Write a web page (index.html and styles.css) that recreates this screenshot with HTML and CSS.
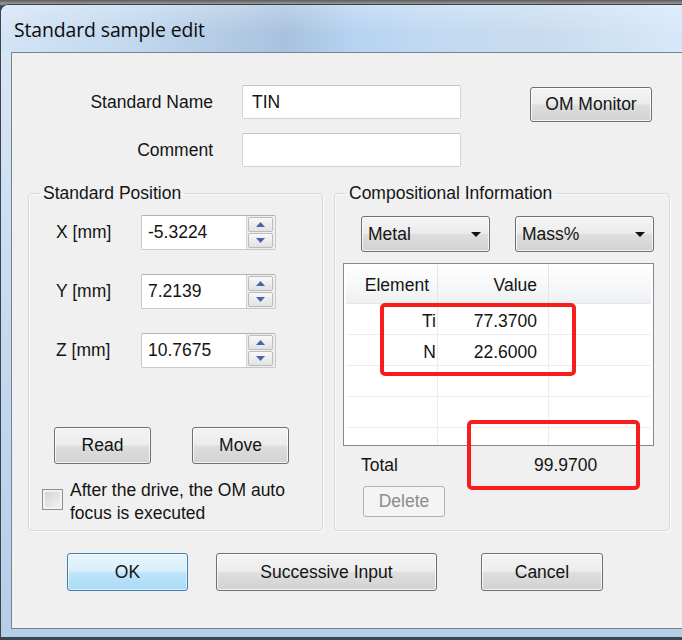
FILE: index.html
```html
<!DOCTYPE html>
<html>
<head>
<meta charset="utf-8">
<title>Standard sample edit</title>
<link rel="stylesheet" href="styles.css">
</head>
<body>
<div class="window">
  <div class="titlebar"><span class="title">Standard sample edit</span></div>
  <div class="frame">
    <div class="client">
      <div class="top">
        <span class="lbl">Standard Name</span>
        <div class="field">TIN</div>
        <button class="btn om">OM Monitor</button>
        <span class="lbl">Comment</span>
        <div class="field"></div>
      </div>

      <div class="groups">
        <fieldset class="group gpos">
          <legend>Standard Position</legend>
          <div class="gbody-l">
            <div class="axes">
              <div class="axis">
                <span class="axis-lbl">X [mm]</span>
                <div class="spin">
                  <div class="spin-val">-5.3224</div>
                  <div class="spin-btns">
                    <span class="sb"><svg width="9" height="5" viewBox="0 0 9 5"><polygon points="0,5 9,5 4.5,0" class="arr"/></svg></span>
                    <span class="sb"><svg width="9" height="5" viewBox="0 0 9 5"><polygon points="0,0 9,0 4.5,5" class="arr"/></svg></span>
                  </div>
                </div>
              </div>
              <div class="axis">
                <span class="axis-lbl">Y [mm]</span>
                <div class="spin">
                  <div class="spin-val">7.2139</div>
                  <div class="spin-btns">
                    <span class="sb"><svg width="9" height="5" viewBox="0 0 9 5"><polygon points="0,5 9,5 4.5,0" class="arr"/></svg></span>
                    <span class="sb"><svg width="9" height="5" viewBox="0 0 9 5"><polygon points="0,0 9,0 4.5,5" class="arr"/></svg></span>
                  </div>
                </div>
              </div>
              <div class="axis">
                <span class="axis-lbl">Z [mm]</span>
                <div class="spin">
                  <div class="spin-val">10.7675</div>
                  <div class="spin-btns">
                    <span class="sb"><svg width="9" height="5" viewBox="0 0 9 5"><polygon points="0,5 9,5 4.5,0" class="arr"/></svg></span>
                    <span class="sb"><svg width="9" height="5" viewBox="0 0 9 5"><polygon points="0,0 9,0 4.5,5" class="arr"/></svg></span>
                  </div>
                </div>
              </div>
            </div>
            <div class="btnrow">
              <button class="btn rm">Read</button>
              <button class="btn rm">Move</button>
            </div>
            <div class="check">
              <span class="cb"></span>
              <span class="cb-text">After the drive, the OM auto<br>focus is executed</span>
            </div>
          </div>
        </fieldset>

        <fieldset class="group gcomp">
          <legend>Compositional Information</legend>
          <div class="gbody-r">
            <div class="dds">
              <div class="dd dd1"><span>Metal</span><svg width="10" height="5" viewBox="0 0 10 5"><polygon points="0,0 10,0 5,5" fill="#111"/></svg></div>
              <div class="dd dd2"><span>Mass%</span><svg width="10" height="5" viewBox="0 0 10 5"><polygon points="0,0 10,0 5,5" fill="#111"/></svg></div>
            </div>
            <div class="tbl">
              <div class="tr thead"><span class="c1 h">Element</span><span class="c2 h">Value</span><span class="c3"></span></div>
              <div class="tr"><span class="c1 e">Ti</span><span class="c2">77.3700</span><span class="c3"></span></div>
              <div class="tr"><span class="c1 e">N</span><span class="c2">22.6000</span><span class="c3"></span></div>
              <div class="tr"><span class="c1"></span><span class="c2"></span><span class="c3"></span></div>
              <div class="tr"><span class="c1"></span><span class="c2"></span><span class="c3"></span></div>
              <div class="tr"><span class="c1"></span><span class="c2"></span><span class="c3"></span></div>
            </div>
            <div class="total"><span class="total-lbl">Total</span><span class="total-val">99.9700</span></div>
            <button class="btn del" disabled>Delete</button>
          </div>
        </fieldset>
      </div>

      <div class="bottom">
        <button class="btn ok">OK</button>
        <button class="btn succ">Successive Input</button>
        <button class="btn cancel">Cancel</button>
      </div>

      <div class="mark m1"></div>
      <div class="mark m2"></div>
    </div>
  </div>
</div>
</body>
</html>
```
FILE: styles.css
```css
* { box-sizing: border-box; }
html, body { margin: 0; padding: 0; }
body {
  width: 682px;
  height: 640px;
  overflow: hidden;
  background: linear-gradient(#5c5c5c, #9a9a9a 4px, #3a4652 6px);
  font-family: "Liberation Sans", Arial, sans-serif;
  font-size: 17.5px;
  color: #141414;
}
.window {
  margin-top: 4px;
  height: 634px;
  border: 1px solid #3a4450;
  border-right: none;
  border-top-left-radius: 9px;
  background: linear-gradient(#dbe8f6, #c6daef 50%, #b5cee8);
  display: flex;
  flex-direction: column;
  overflow: hidden;
}
.titlebar {
  height: 47px;
  flex: none;
  padding: 1px 0 0 13px;
  display: flex;
  align-items: center;
  background:
    linear-gradient(rgba(255,255,255,0.25), rgba(255,255,255,0) 60%),
    linear-gradient(to right, #d3e4f5 0%, #c4d9ef 18%, #a8c2de 42%, #b6d3f1 52%, #c0d9f2 62%, #c9dcef 80%, #d6e8f9 100%);
}
.title {
  font-family: "Open Sans", "Noto Sans", sans-serif;
  font-size: 19.4px;
  color: #0c0c0c;
  letter-spacing: -0.1px;
}
.frame {
  flex: 1;
  padding: 0 0 8px 10px;
  display: flex;
}
.client {
  flex: 1;
  position: relative;
  background: #f0f0f0;
  border: 1px solid #76838f;
  border-right: none;
}

/* top fields */
.top {
  display: grid;
  grid-template-columns: 201px 219px 162px;
  grid-template-rows: 34px 34px;
  column-gap: 29px;
  row-gap: 14px;
  padding-top: 32px;
}
.lbl {
  align-self: center;
  text-align: right;
  line-height: 20px;
}
.field {
  background: #fff;
  border: 1px solid #d3d3d3;
  border-top-color: #c4c4c4;
  border-radius: 2px;
  padding-left: 9px;
  line-height: 32px;
}

/* buttons */
.btn {
  font: inherit;
  color: #141414;
  padding: 0;
  margin: 0;
  border: 1px solid #707070;
  border-radius: 3px;
  background: linear-gradient(#f4f4f4, #ececec 48%, #dedede 52%, #d2d2d2);
  box-shadow: inset 0 0 0 1px rgba(255,255,255,0.75);
  text-align: center;
}
.om {
  width: 122px;
  height: 35px;
  margin: 2px 0 0 40px;
  align-self: start;
}

/* groups */
.groups {
  display: flex;
  gap: 11px;
  margin-top: 16px;
  padding-left: 16px;
}
.group {
  margin: 0;
  padding: 0;
  min-width: 0;
  height: 348px;
  border: 1px solid #d3dce2;
  border-radius: 4px;
  box-shadow: inset 1px 1px 0 #fbfbfb, 1px 1px 0 #fbfbfb;
}
.group legend {
  margin-left: 11px;
  padding: 0 3px;
  line-height: 20px;
  height: 20px;
}
.gpos { width: 295px; }
.gcomp { width: 336px; }

.gbody-l {
  padding: 12px 0 0 27px;
  display: flex;
  flex-direction: column;
}
.axes {
  display: flex;
  flex-direction: column;
  gap: 24px;
}
.axis {
  display: flex;
  align-items: center;
  height: 35px;
}
.axis-lbl { width: 85px; }
.spin {
  width: 135px;
  height: 35px;
  display: flex;
  border: 1px solid #c8c8c8;
  border-top-color: #b2b2b2;
  border-radius: 2px;
  background: #fff;
}
.spin-val {
  flex: 1;
  padding-left: 6px;
  line-height: 33px;
}
.spin-btns {
  width: 29px;
  display: flex;
  flex-direction: column;
  gap: 1px;
  padding: 1px 2px 1px 1px;
  background: #eeeeee;
  border-left: 1px solid #d4d4d4;
}
.sb {
  flex: 1;
  display: flex;
  align-items: center;
  justify-content: center;
  border: 1px solid #bcbcbc;
  border-radius: 2px;
  background: linear-gradient(#f8f8f8, #e2e2e2);
}
.arr { fill: #4862b0; }

.btnrow {
  display: flex;
  gap: 41px;
  margin: 59px 0 0 -2px;
}
.rm { width: 97px; height: 37px; }

.check {
  display: flex;
  margin: 15px 0 0 -14px;
}
.cb {
  width: 21px;
  height: 21px;
  margin-top: 10px;
  border: 1px solid #8e8f8f;
  background: linear-gradient(135deg, #cfd2d6, #f4f4f4);
  box-shadow: inset 0 0 0 2px #f2f2f2;
  flex: none;
}
.cb-text {
  margin-left: 7px;
  line-height: 23px;
}

.gbody-r {
  padding-top: 13px;
  display: flex;
  flex-direction: column;
}
.dds {
  display: flex;
  gap: 25px;
  padding-left: 26px;
}
.dd {
  height: 36px;
  display: flex;
  align-items: center;
  justify-content: space-between;
  padding: 0 8px 0 6px;
  border: 1px solid #707070;
  border-radius: 3px;
  background: linear-gradient(#f4f4f4, #ececec 48%, #dedede 52%, #d2d2d2);
  box-shadow: inset 0 0 0 1px rgba(255,255,255,0.75);
}
.dd1 { width: 129px; }
.dd2 { width: 139px; }

.tbl {
  margin: 11px 0 0 8px;
  width: 311px;
  height: 183px;
  border: 1px solid #84898f;
  background: #fff;
  padding: 1px 2px 0 2px;
  overflow: hidden;
}
.tr {
  display: grid;
  grid-template-columns: 92px 111px 1fr;
  height: 31px;
  border-bottom: 1px solid #ededed;
}
.tr span {
  display: flex;
  align-items: center;
  justify-content: flex-end;
  padding-top: 4px;
}
.tr .c1, .tr .c2 { border-right: 1px solid #ededed; }
.tr .c1 { padding-right: 1px; }
.tr .c2 { padding-right: 11px; }
.thead {
  height: 39px;
  background: linear-gradient(#ffffff, #f7f8f9 50%, #eef0f2);
  border-bottom: 1px solid #e4e6e8;
}
.thead span { padding-top: 3px; }
.thead .c1, .thead .c2 { border-right-color: #e2e4e6; }
.thead .c1 { padding-right: 8px; }

.total {
  margin-top: 9px;
  height: 20px;
  line-height: 20px;
  display: flex;
  padding-left: 26px;
}
.total-lbl { width: 173px; }
.del {
  width: 82px;
  height: 31px;
  margin: 11px 0 0 28px;
  border-color: #adb2b5;
  background: #f4f4f4;
  color: #8c8c8c;
  box-shadow: none;
}

.bottom {
  display: flex;
  margin-top: 22px;
  padding-left: 55px;
}
.bottom .btn { height: 38px; }
.ok {
  width: 121px;
  border-color: #3c7fb1;
  background: linear-gradient(#e9f5fd, #d8eefb 48%, #bfe5fb 52%, #a9d9f5);
  box-shadow: inset 0 0 0 1px rgba(255,255,255,0.6);
}
.succ { width: 221px; margin-left: 28px; }
.cancel { width: 122px; margin-left: 44px; }

/* red annotation boxes over the dialog */
.mark {
  position: absolute;
  border: 4.5px solid #f81d1d;
  border-radius: 5px;
}
.m1 { left: 368px; top: 250px; width: 196px; height: 73px; }
.m2 { left: 455px; top: 367px; width: 173px; height: 70px; }
```
